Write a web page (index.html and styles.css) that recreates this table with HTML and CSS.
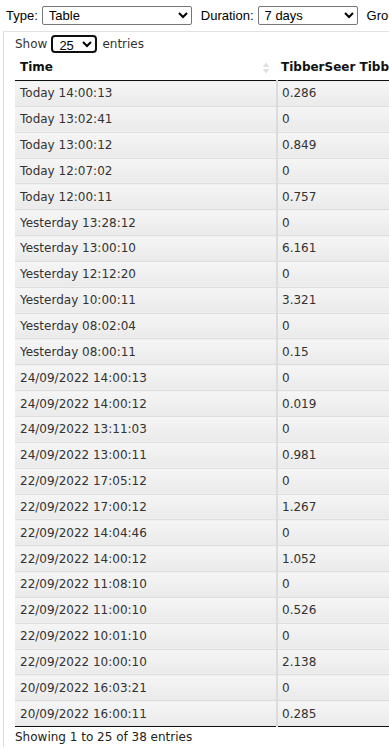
FILE: index.html
```html
<!DOCTYPE html>
<html>
<head>
<meta charset="utf-8">
<link rel="stylesheet" href="styles.css">
</head>
<body>
<div class="controls">
  <label class="lbl">Type:</label>
  <select class="sel sel-type"><option>Table</option></select>
  <label class="lbl lbl-dur">Duration:</label>
  <select class="sel sel-dur"><option>7 days</option></select>
  <label class="lbl lbl-gro">Group by:</label>
</div>
<div class="panel">
  <div class="length">Show <select class="len-sel"><option>25</option></select> entries</div>
  <table class="data">
    <thead>
      <tr>
        <th class="c1"><span>Time</span><span class="sort"><svg width="8" height="12" viewBox="0 0 8 12"><path d="M4 0.5 L7.5 5 H0.5 Z" fill="#e0e0e0"/><path d="M4 11.5 L7.5 7 H0.5 Z" fill="#e0e0e0"/></svg></span></th>
        <th class="c2">TibberSeer Tibber Consumption</th>
      </tr>
    </thead>
    <tbody>
      <tr><td>Today 14:00:13</td><td>0.286</td></tr>
      <tr><td>Today 13:02:41</td><td>0</td></tr>
      <tr><td>Today 13:00:12</td><td>0.849</td></tr>
      <tr><td>Today 12:07:02</td><td>0</td></tr>
      <tr><td>Today 12:00:11</td><td>0.757</td></tr>
      <tr><td>Yesterday 13:28:12</td><td>0</td></tr>
      <tr><td>Yesterday 13:00:10</td><td>6.161</td></tr>
      <tr><td>Yesterday 12:12:20</td><td>0</td></tr>
      <tr><td>Yesterday 10:00:11</td><td>3.321</td></tr>
      <tr><td>Yesterday 08:02:04</td><td>0</td></tr>
      <tr><td>Yesterday 08:00:11</td><td>0.15</td></tr>
      <tr><td>24/09/2022 14:00:13</td><td>0</td></tr>
      <tr><td>24/09/2022 14:00:12</td><td>0.019</td></tr>
      <tr><td>24/09/2022 13:11:03</td><td>0</td></tr>
      <tr><td>24/09/2022 13:00:11</td><td>0.981</td></tr>
      <tr><td>22/09/2022 17:05:12</td><td>0</td></tr>
      <tr><td>22/09/2022 17:00:12</td><td>1.267</td></tr>
      <tr><td>22/09/2022 14:04:46</td><td>0</td></tr>
      <tr><td>22/09/2022 14:00:12</td><td>1.052</td></tr>
      <tr><td>22/09/2022 11:08:10</td><td>0</td></tr>
      <tr><td>22/09/2022 11:00:10</td><td>0.526</td></tr>
      <tr><td>22/09/2022 10:01:10</td><td>0</td></tr>
      <tr><td>22/09/2022 10:00:10</td><td>2.138</td></tr>
      <tr><td>20/09/2022 16:03:21</td><td>0</td></tr>
      <tr><td>20/09/2022 16:00:11</td><td>0.285</td></tr>
    </tbody>
  </table>
  <div class="info">Showing 1 to 25 of 38 entries</div>
</div>
</body>
</html>
```
FILE: styles.css
```css
html, body {
  margin: 0;
  padding: 0;
  overflow: hidden;
  background: #fff;
}
body {
  font-family: "Liberation Sans", Arial, sans-serif;
  font-size: 13px;
  color: #000;
  width: 700px;
}
.controls {
  display: flex;
  align-items: center;
  height: 31px;
  padding-left: 6px;
  white-space: nowrap;
}
.lbl {
  font-size: 13px;
  margin-right: 4px;
}
.lbl-dur { margin-left: 9px; }
.lbl-gro { margin-left: 9px; }
.sel {
  font-family: "Liberation Sans", Arial, sans-serif;
  font-size: 13px;
  height: 19px;
  border: 1px solid #767676;
  border-radius: 2px;
  background: #fff;
  color: #000;
  padding: 0 0 0 2px;
}
.sel-type { width: 150px; }
.sel-dur { width: 100px; }
.panel {
  border-left: 1px solid #ddd;
  border-top: 1px solid #e2e2e2;
  margin-left: 3px;
  padding-left: 11px;
  font-family: "DejaVu Sans", Verdana, sans-serif;
  font-size: 12px;
}
.length {
  display: flex;
  align-items: center;
  height: 21px;
  margin-top: 1px;
  color: #333;
}
.len-sel {
  width: 46px;
  height: 18px;
  margin: 0 5px 0 4px;
  border: 2px solid #101010;
  border-radius: 4px;
  font-family: "Liberation Sans", Arial, sans-serif;
  font-size: 13px;
  padding: 0 0 0 2px;
  background: #fff;
  color: #000;
}
.data {
  border-collapse: collapse;
  margin-top: 0;
}
.data th {
  text-align: left;
  font-weight: bold;
  color: #111;
  padding: 0 5px;
  height: 26px;
  border-bottom: 1px solid #111;
  white-space: nowrap;
}
.data th.c1 { width: 252px; position: relative; }
.data th.c2 { width: 300px; padding-left: 4px; }
.sort {
  position: absolute;
  right: 7px;
  top: 8px;
  line-height: 0;
}
.data td {
  height: 25.85px;
  box-sizing: border-box;
  padding: 0 5px;
  color: #333;
  white-space: nowrap;
  background: linear-gradient(#f5f5f5, #eaeaea);
  border-top: 1px solid #f8f8f8;
  border-bottom: 1px solid #dedede;
}
.data td:first-child {
  border-right: 2px solid #dcdcdc;
}
.data td:nth-child(2) { padding-left: 4px; }
.data tbody tr:last-child td { border-bottom: 1px solid #111; }
.info {
  color: #222;
  height: 20px;
  line-height: 20px;
}
```
